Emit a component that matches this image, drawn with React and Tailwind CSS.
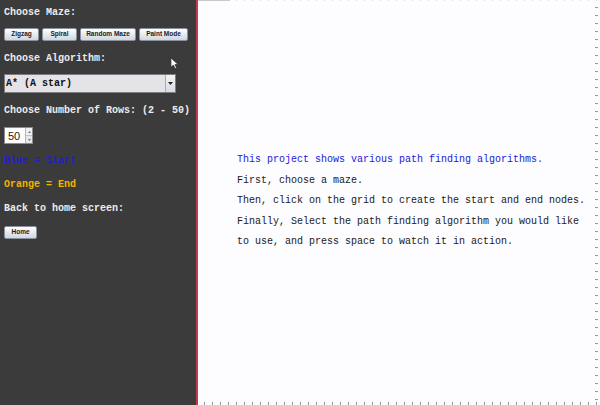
import React from "react"

const mono = { fontFamily: '"Courier New", "Nimbus Mono PS", FreeMono, "Liberation Mono", monospace' }

function MazeButton({ label, w }) {
    return (
        <button
            className={`${w} h-[13px] flex items-center justify-center rounded-[2px] border border-[#8c929c] bg-gradient-to-b from-white to-[#cfd7e2] text-[6.5px] font-bold text-[#1c1c1c] leading-none`}
            style={{ fontFamily: '"Liberation Sans", Arial, sans-serif' }}
        >
            {label}
        </button>
    )
}

function Ticks() {
    const bottom = []
    for (let x = 6; x < 400; x += 8) bottom.push(x)
    const side = []
    for (let y = 7; y < 400; y += 8) side.push(y)
    return (
        <svg className="absolute inset-0 pointer-events-none" width="402" height="405">
            {bottom.map((x) => (
                <rect key={"b" + x} x={x} y={402} width={1} height={3} fill="#9a9a9a" />
            ))}
            {bottom.map((x) => (
                <rect key={"t" + x} x={x} y={0} width={1} height={1} fill="#d6d6d6" />
            ))}
            {side.map((y) => (
                <rect key={"s" + y} x={397} y={y} width={3} height={1} fill="#9a9a9a" />
            ))}
            <rect x={0} y={0} width={32} height={1} fill="#c8c8c8" />
        </svg>
    )
}

export default function App() {
    return (
        <div className="w-[600px] h-[405px] flex overflow-hidden bg-[#fdfcff]" style={mono}>
            <div className="relative w-[196px] h-full bg-[#3c3b3c] flex flex-col pl-[4px] text-[10px] leading-[12px] font-bold text-[#ececec]">
                <div className="mt-[7px]">Choose Maze:</div>
                <div className="mt-[9px] flex gap-[3px]">
                    <MazeButton label="Zigzag" w="w-[35px]" />
                    <MazeButton label="Spiral" w="w-[35px]" />
                    <MazeButton label="Random Maze" w="w-[56px]" />
                    <MazeButton label="Paint Mode" w="w-[49px]" />
                </div>
                <div className="mt-[12px]">Choose Algorithm:</div>
                <div className="mt-[9px] w-[172px] h-[19px] flex border border-[#7d7d80] bg-[#e4e4e8]">
                    <div className="flex-1 flex items-center pl-[1px] text-[#111] font-bold">A* (A star)</div>
                    <div className="w-[10px] flex items-center justify-center border-l border-[#a9a9b0] bg-gradient-to-b from-[#f4f4f6] to-[#d8dbe2]">
                        <svg width="5" height="3">
                            <polygon points="0,0 5,0 2.5,3" fill="#222" />
                        </svg>
                    </div>
                </div>
                <div className="mt-[12px]">Choose Number of Rows: (2 - 50)</div>
                <div className="mt-[10px] w-[29px] h-[17px] flex border border-[#8d8d8d] bg-white">
                    <div
                        className="flex-1 flex items-center pl-[3px] text-[11px] font-normal text-[#222]"
                        style={{ fontFamily: '"Liberation Sans", Arial, sans-serif' }}
                    >
                        50
                    </div>
                    <div className="w-[7px] flex flex-col border-l border-[#b5b5b5]">
                        <div className="flex-1 flex items-center justify-center bg-[#eef0f3] border-b border-[#c4c4c4]">
                            <svg width="3" height="2"><polygon points="0,2 3,2 1.5,0" fill="#777" /></svg>
                        </div>
                        <div className="flex-1 flex items-center justify-center bg-[#e4e7ec]">
                            <svg width="3" height="2"><polygon points="0,0 3,0 1.5,2" fill="#777" /></svg>
                        </div>
                    </div>
                </div>
                <div className="mt-[11px] text-[#1f1fd0]">Blue = Start</div>
                <div className="mt-[12px] text-[#f0b400]">Orange = End</div>
                <div className="mt-[12px]">Back to home screen:</div>
                <div className="mt-[11px] flex">
                    <MazeButton label="Home" w="w-[33px]" />
                </div>
                <svg className="absolute left-[171px] top-[58px]" width="8" height="11">
                    <polygon points="0,0 0,9 2.5,7 4,10.5 5.5,10 4,6.5 7,6.5" fill="#fff" stroke="#222" strokeWidth="0.6" />
                </svg>
            </div>
            <div className="w-[2px] h-full bg-[#c23a4c]" />
            <div className="relative flex-1 h-full">
                <div className="pt-[150px] pl-[39px] text-[10px] leading-[20.5px] text-[#1a1a1a]">
                    <div className="text-[#2020d8]">This project shows various path finding algorithms.</div>
                    <div>First, choose a maze.</div>
                    <div>Then, click on the grid to create the start and end nodes.</div>
                    <div>Finally, Select the path finding algorithm you would like</div>
                    <div>to use, and press space to watch it in action.</div>
                </div>
                <Ticks />
            </div>
        </div>
    )
}
